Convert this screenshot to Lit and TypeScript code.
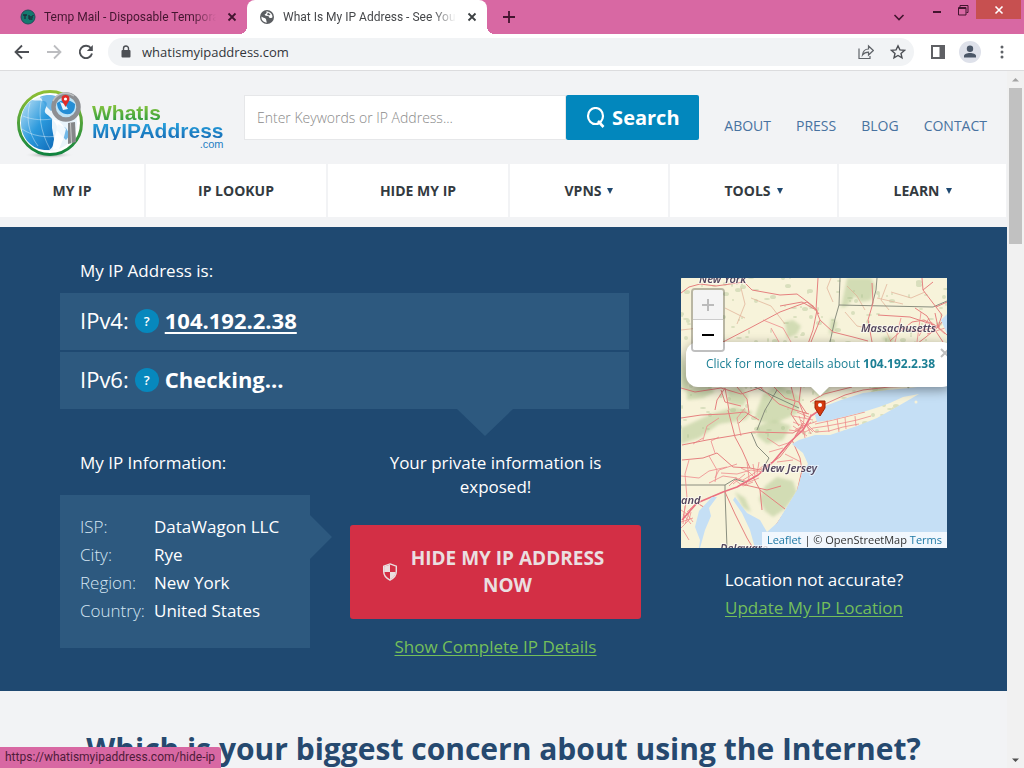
import { LitElement, html, svg, css } from "lit";
import { customElement, state } from "lit/decorators.js";

const ui = css`
  *, *::before, *::after { box-sizing: border-box; }
  button, input { font: inherit; color: inherit; border: 0; background: none; padding: 0; margin: 0; }
  button { cursor: pointer; }
  a { color: inherit; text-decoration: none; }
  svg { display: block; flex: none; }
`;

@customElement("browser-chrome")
class BrowserChrome extends LitElement {
  static styles = [ui, css`
    :host { display: block; flex: none; font-family: "Open Sans", sans-serif; }
    .titlebar { height: 34px; background: #d868a3; display: flex; align-items: flex-start; padding-left: 8px; color: #43152f; }
    .tab { height: 34px; width: 239px; display: flex; align-items: center; gap: 8px; padding: 0 7px 0 12px; font: 12px Roboto, sans-serif; }
    .tab.active { width: 240px; background: #fff; border-radius: 8px 8px 0 0; color: #45474a; position: relative; }
    .tab.active::before, .tab.active::after {
      content: ""; position: absolute; bottom: 0; width: 8px; height: 8px;
    }
    .tab.active::before { right: 100%; background: radial-gradient(circle at 0 0, transparent 8px, #fff 8px); }
    .tab.active::after { left: 100%; background: radial-gradient(circle at 100% 0, transparent 8px, #fff 8px); }
    .title {
      flex: 1; min-width: 0; overflow: hidden; white-space: nowrap; line-height: 16px;
      mask-image: linear-gradient(to right, #000 calc(100% - 24px), transparent);
    }
    .newtab { height: 34px; width: 44px; display: grid; place-items: center; }
    .controls { margin-left: auto; display: flex; align-items: flex-start; padding-right: 3px; }
    .ctl { display: grid; place-items: center; height: 19px; width: 26px; }
    .more { height: 34px; width: 50px; }
    .close { width: 45px; background: #c75050; }
    .toolbar { height: 37px; background: #fff; border-bottom: 1px solid #dcdcde; display: flex; align-items: center; padding: 0 6px; }
    .tool { width: 32px; height: 32px; display: grid; place-items: center; }
    .address { flex: 1; height: 28px; margin: 0 8px 0 6px; border-radius: 14px; background: #f1f3f5; display: flex; align-items: center; padding-left: 10px; }
    .address input { flex: 1; min-width: 0; margin-left: 8px; font-size: 13px; color: #33363b; outline: none; }
  `];

  private cross(c: string) {
    return html`<svg width="16" height="16" viewBox="0 0 16 16"><path d="M4.500 4.500L11.500 11.500M11.500 4.500L4.500 11.500" stroke=${c} stroke-width="1.800" /></svg>`;
  }

  render() {
    return html`
      <div class="titlebar">
        <div class="tab">
          <svg width="16" height="16" viewBox="0 0 16 16"><circle cx="8" cy="8" r="7" fill="#14796f" /><circle cx="8" cy="8" r="7" fill="none" stroke="#28495a" /><path d="M3 6h4M5 6v4M9 6v4M9 8h4M13 6v1M9 10h3.500" stroke="#1d2f3c" stroke-width="1.300" fill="none" /></svg>
          <span class="title">Temp Mail - Disposable Temporary Email</span>
          <button aria-label="Close tab">${this.cross("#43152f")}</button>
        </div>
        <div class="tab active">
          <svg width="16" height="16" viewBox="0 0 16 16"><circle cx="8" cy="8" r="7" fill="#5b5e62" /><path d="M2.500 7.500C4 9 5.500 8.500 6.500 9.500S7 12 8 13.500C4.500 13.500 2 11 2.500 7.500ZM7 2.500C8.500 3.500 7 5 5.500 5.500L7 7c2-.5 3 .5 3.500 2 1 .3 2 0 3-.8C13.500 5 11 2.300 7 2.500Z" fill="#fff" /><path d="M9 3.500l2.500 2-1.500 1L8 5.500z" fill="#5b5e62" /></svg>
          <span class="title">What Is My IP Address - See Your Public Address</span>
          <button aria-label="Close tab">${this.cross("#3c4043")}</button>
        </div>
        <button class="newtab" aria-label="New tab">
          <svg width="14" height="14" viewBox="0 0 14 14"><path d="M7 1v12M1 7h12" stroke="#43152f" stroke-width="1.800" /></svg>
        </button>
        <div class="controls">
          <button class="ctl more" aria-label="Search tabs"><svg width="12" height="12" viewBox="0 0 12 12"><path d="M1.500 4L6 8.500L10.500 4" fill="none" stroke="#43152f" stroke-width="1.600" /></svg></button>
          <button class="ctl" aria-label="Minimize"><svg width="12" height="12" viewBox="0 0 12 12"><path d="M2 8h8" stroke="#43152f" stroke-width="2" /></svg></button>
          <button class="ctl" aria-label="Restore"><svg width="12" height="12" viewBox="0 0 12 12"><path d="M3 3V1.500h8v7H9.500M1.500 3.500h7.500v7.500H1.500zM1 4.500h8" fill="none" stroke="#43152f" /></svg></button>
          <button class="ctl close" aria-label="Close"><svg width="10" height="10" viewBox="0 0 10 10"><path d="M1.500 1.500l7 7M8.500 1.500l-7 7" stroke="#fff" stroke-width="1.600" /></svg></button>
        </div>
      </div>
      <div class="toolbar">
        <button class="tool" aria-label="Back"><svg width="16" height="16" viewBox="0 0 16 16"><path d="M15 8H2M8 1.500L1.500 8L8 14.500" fill="none" stroke="#4c4f54" stroke-width="1.800" /></svg></button>
        <button class="tool" aria-label="Forward"><svg width="16" height="16" viewBox="0 0 16 16"><path d="M1 8h13M8 1.500L14.500 8L8 14.500" fill="none" stroke="#bcbdc0" stroke-width="1.800" /></svg></button>
        <button class="tool" aria-label="Reload"><svg width="16" height="16" viewBox="0 0 16 16"><path d="M13 4.200A6.200 6.200 0 1 0 14 9.500" fill="none" stroke="#4c4f54" stroke-width="1.900" /><path d="M14.800 1v6H8.800z" fill="#4c4f54" /></svg></button>
        <div class="address">
          <svg width="16" height="16" viewBox="0 0 16 16"><path d="M5.500 7V4.500a2.500 2.500 0 0 1 5 0V7" fill="none" stroke="#4c4f54" stroke-width="1.400" /><rect x="3.500" y="6" width="9" height="7.500" rx="1" fill="#4c4f54" /></svg>
          <input aria-label="Address" value="whatismyipaddress.com" />
          <button class="tool" aria-label="Share"><svg width="16" height="16" viewBox="0 0 16 16"><path d="M1 4.500V14.500H12V12M4.500 11C5 7 7 5 10.500 5V2L15.300 6.500L10.500 11V8.200C8 8.200 6 9 4.500 11Z" fill="none" stroke="#5f6368" stroke-width="1.200" /></svg></button>
          <button class="tool" aria-label="Bookmark"><svg width="16" height="16" viewBox="0 0 16 16"><path d="M8 1.800l1.900 4.100 4.500.5-3.400 3 1 4.400L8 11.500l-4 2.300 1-4.400-3.400-3 4.500-.5z" fill="none" stroke="#4c4f54" stroke-width="1.400" /></svg></button>
        </div>
        <button class="tool" aria-label="Side panel"><svg width="16" height="16" viewBox="0 0 16 16"><path d="M1 1h14v14H1zM3 3v10h6.500V3z" fill-rule="evenodd" fill="#5f6064" /></svg></button>
        <button class="tool" aria-label="Profile"><svg width="22" height="22" viewBox="0 0 22 22"><circle cx="11" cy="11" r="11" fill="#dee1ea" /><circle cx="11" cy="7.700" r="3.200" fill="#4b5768" /><path d="M5 16.500v-1.500c0-2 3-3 6-3s6 1 6 3v1.500z" fill="#4b5768" /></svg></button>
        <button class="tool" aria-label="Menu"><svg width="16" height="16" viewBox="0 0 16 16"><g fill="#5f6368"><circle cx="8" cy="3" r="1.500" /><circle cx="8" cy="8" r="1.500" /><circle cx="8" cy="13" r="1.500" /></g></svg></button>
      </div>
    `;
  }
}

@customElement("site-header")
class SiteHeader extends LitElement {
  static styles = [ui, css`
    :host { display: block; background: #f2f3f5; font-family: "Open Sans", sans-serif; }
    .top { display: flex; align-items: flex-start; padding: 18px 20px 0 16px; height: 93px; }
    .logo { display: flex; gap: 8px; width: 208px; }
    .words { display: flex; flex-direction: column; font: bold 21px/18px "Liberation Sans", sans-serif; padding-top: 15px; }
    .green, .blue { background: linear-gradient(#8cc63f, #2a9a3d); background-clip: text; color: transparent; }
    .blue { background: linear-gradient(#2aa6e0, #1568b3); background-clip: text; }
    .com { font: 11px/9px "Liberation Sans", sans-serif; color: #1f7fc4; text-align: right; }
    .search { display: flex; flex: 1; margin: 6px 25px 0 20px; }
    .field { flex: 1; min-width: 0; height: 45px; background: #fff; border: 1px solid #e6e7e9; padding: 0 12px; font-size: 14px; color: #555; outline: none; }
    .field::placeholder { color: #8a8a8a; opacity: 1; font-weight: 300; }
    .go { width: 133px; height: 45px; background: #0287bd; color: #fff; border-radius: 2px; font-weight: 700; font-size: 20px; display: flex; align-items: center; justify-content: center; gap: 6px; }
    .links { display: flex; gap: 25px; margin-top: 27px; font-size: 14px; line-height: 20px; color: #4872a0; font-weight: 500; }
    .menu { display: grid; grid-template-columns: 144fr 180fr 180fr 158fr 167fr 167fr; gap: 2px; padding: 0 1px 10px 0; }
    .item { height: 53px; background: #fff; color: #333a40; font-size: 14px; font-weight: 700; display: flex; align-items: center; justify-content: center; gap: 6px; }
  `];

  render() {
    const plain = ["MY IP", "IP LOOKUP", "HIDE MY IP"];
    const drops = ["VPNS", "TOOLS", "LEARN"];
    return html`
      <div class="top">
        <a class="logo" href="#" aria-label="WhatIsMyIPAddress.com">
          <svg width="68" height="70" viewBox="0 0 68 70">
            <defs>
              <linearGradient id="ring" x1="0" y1="0" x2="0" y2="1"><stop offset="0" stop-color="#8fbf35" /><stop offset="1" stop-color="#10843f" /></linearGradient>
              <linearGradient id="sea" x1="0" y1="0" x2="1" y2="1"><stop offset="0" stop-color="#bfe2f6" /><stop offset=".5" stop-color="#2c9add" /><stop offset="1" stop-color="#0b66b5" /></linearGradient>
              <radialGradient id="shade"><stop offset="0" stop-color="#777" /><stop offset="1" stop-color="#f2f3f5" stop-opacity="0" /></radialGradient>
            </defs>
            <ellipse cx="33" cy="66" rx="25" ry="3.500" fill="url(#shade)" />
            <circle cx="34" cy="34" r="31.500" fill="#fff" stroke="url(#ring)" stroke-width="3" />
            <circle cx="33" cy="34" r="28" fill="#e9f4fb" />
            <path d="M5 34C5 24 9 15 16 11c4 1 7 0 12 1s2 6 1 9 2 4 4 6 8 7 8 11-2 8-3 13-1 8-5 10C17 62 5 50 5 34Z" fill="url(#sea)" />
            <path d="M24 8c6-3 12-2 16-1l-3 6 4 5-6 4-5-5zM42 35l8 4 4 7-4 5-5-5-5-6z" fill="#3f9fdf" opacity=".7" />
            <path d="M7 27c9 4 22 5 33 2M6 40c10 7 24 9 36 7M14 14c-4 14-2 30 8 43M26 8c-4 16-2 34 8 52" fill="none" stroke="#fff" stroke-width=".7" opacity=".55" />
            <path d="M36 30l7 2 7 8-2 8-5 12-6 1 1-11-2-11z" fill="#fff" opacity=".9" />
            <path d="M52 34l7-1 1 20-8 2z" fill="#858789" /><path d="M54.500 34l1 20" stroke="#c8c9ca" />
            <circle cx="50" cy="18" r="12.500" fill="#bfe3f6" stroke="#8d8f93" stroke-width="4.500" />
            <path d="M41 14c6-4 12-4 18 1 0 5-1 8-5 10-7 1-13-3-13-11Z" fill="#268ed5" />
            <path d="M44 13l5 2 3 5-5 1z" fill="#e8f5fc" />
            <path d="M37 12a14 14 0 0 1 21-5" fill="none" stroke="#bfc1c3" stroke-width="1.500" />
            <path d="M49.500 18c-2-4-4-6-4-8a4 4 0 0 1 8 0c0 2-2 4-4 8Z" fill="#e02b28" /><circle cx="49.500" cy="10" r="1.600" fill="#fff" />
          </svg>
          <span class="words"><span class="green">WhatIs</span><span class="blue">MyIPAddress</span><span class="com">.com</span></span>
        </a>
        <form class="search" @submit=${(e: Event) => e.preventDefault()}>
          <input class="field" aria-label="Search" placeholder="Enter Keywords or IP Address..." />
          <button class="go"><svg width="20" height="22" viewBox="0 0 20 22"><ellipse cx="9.500" cy="9" rx="7.500" ry="8" fill="none" stroke="#fff" stroke-width="2.200" /><path d="M12 14l5.500 6" stroke="#fff" stroke-width="2.600" /></svg>Search</button>
        </form>
        <nav class="links">${["ABOUT", "PRESS", "BLOG", "CONTACT"].map((t) => html`<a href="#">${t}</a>`)}</nav>
      </div>
      <nav class="menu">
        ${plain.map((t) => html`<a class="item" href="#">${t}</a>`)}
        ${drops.map((t) => html`<button class="item">${t}<svg width="6" height="6" viewBox="0 0 6 6"><path d="M0 0h6L3 6z" fill="#1f4971" /></svg></button>`)}
      </nav>
    `;
  }
}

const WOODS = [
  "M166 0h24l4 8-4 14-10 2-6-6-8 10-6 2zM104 44l8-2 8 6-4 8-10 4zM150 40l6 4-2 10-6 2z",
  "M0 74l3 10 5 22-2 8-6-4zM6 110l22-2 6 6-12 6-16 2zM46 112l14-2 8 8-6 10-14-2z",
  "M74 138l8-22 16-9 22 12-3 16-22 10-16-1zM130 110l14-2 6 6-12 6z",
  "M0 150l30-14 24-7 18 5-8 8-26 4-20 14-18 6zM76 148l18-6 16 6-8 14-16 4-10-8z",
  "M84 208l12-9 16 4 4 12-12 16-12 8-8-6-6-12zM54 214l10 6 6 14-8-4z",
  "M200 60l8-2 6 4-6 4zM188 112l10-4 12 4-10 4z",
];

const ROADS = [
  "M1 182l21-2 14-5 16 14 17 1 10 2 20-13 13-17 10-17",
  "M1 167l25-5 30-5 16-3 40 1 10-6",
  "M47 132l7 27 7 13 8 18M44 110l4 22",
  "M72 199l7 13 25 19M79 212l2 20M60 206l26 6 14-4",
  "M111 162l8 18 2 12-5 22-12 20-18 26",
  "M44 214l10 22 12 24 6 10M16 225l10 6-8 12",
  "M0 15l8-6 11-3 16 2 28-4 8 8 28 5 17-1 16 12 6 8",
  "M42 64l27-14 30-16 27-10 10 8 -4 20-5 14",
  "M137 0l-2 32 4 10 13 12 20 5 15 4M139 42l-9 22M135 32l-14-8-22 4",
  "M191 5l1 20-5 17 4 22M197 37l32 2 30 10",
  "M241 0l1 12 13 17 6 8-4 12-12 10-8 6M242 12l10-8M255 29l11-5",
  "M257 49l-14-7-12 2-10 8-12 11M257 49l-20 4-18-3M257 49l-3-14M257 49l9 8M257 49l8-10M234 30l12 8 8 14 8 12",
  "M0 110l14 4 26-4 20 6 18-6 12-4M0 140l20-3 24-1 20-2 14 8",
  "M40 112l4 12 16 4M56 109l10 12 2 14-10 10M34 132l2-10 8-12",
  "M144 126l20-9 18-5 26-3 26-1 30-4M129 124l14-8 16-4 12-3",
  "M92 108l12 12 14 4 8 12M80 110l18 16 16 6 14 4",
  "M110 108l4 16-4 12 8 12M120 108l-2 16 6 16",
];

const STREETS = [
  "M112 144l10 4 12-4 8-4M114 152l12-6 8 8M118 138l4 12 2 10M124 134l-2 14-8 10M130 136l-4 12 4 8M112 148l14 10M116 156l14-12M108 152l16 2 8-4M116 134l14 6M112 138l20 4M120 142l12 12",
  "M132 150l14-2 16-3 14-3 14-4M134 154l14-1 14-4 16-3M134 146l14-3 16-4 20-5M146 142l2 12M156 140l2 14M164 139l1 12M174 138l1 10",
  "M60 190l8 4 6 6M56 196l14-4 12 2M62 202l10-6 10-8M66 184l2 16-4 8M72 186l2 12M54 200l14 4 10-4M52 206l12-10M40 195l16 1M34 200l4-8 18-6M28 205l14-7 14 2M48 208l6-6 8 6 10-4M78 184l-2 12",
  "M0 232l6 4 6 8M0 250l8-8 2-8M2 236l8 10M4 228l-2 18M10 230l-6 16M0 244l12-4M14 226l-8 8M2 252l6 10",
  "M8 182l-4 14 2 24-4 20M22 162l4-14 12-8M28 178l8 14-2 12M0 198l18 2 10-7 18-4M60 158l-4-18 8-10M12 166l10-6M34 175l-4-12 8-4M86 160l12 8 12-4M88 174l14-4M96 184l16-2M104 176l16 8",
  "M90 50l8 14M110 64l-8-14-20-8M220 40l-6 24M240 34l-4 30M248 40l-10 18M246 56l18-6M250 44l14 12",
];

const MINOR = "M30 60l10 4M60 10l4 16-8 20M0 52l18-2M150 0l-4 10 6 14M166 8l10 10 8 14M206 6l-6 16 8 10M204 50l6 14M210 14l20 6 14-6M164 34l12 14 10 2M196 20l26 6M70 20l20 8 14 18M44 30l20 10";

const BORDERS = [
  "M159 0l-1 27-4 14-5 23M158 27l94 2 14-6M196 0l-1 12-4 15",
  "M0 207h44v7l2 56M44 207l10-6 12 4",
  "M72 108l12 6 34 16M76 152l8-20 12-20M70 154l6 14 12 12-8 14M229 116l-3-10",
];

@customElement("location-map")
class LocationMap extends LitElement {
  static styles = [ui, css`
    :host { display: block; position: relative; height: 270px; overflow: hidden; background: #c5dff5; font-family: "Open Sans", sans-serif; }
    .tiles { width: 100%; height: 100%; }
    .label { font: italic 600 11px "Noto Sans", sans-serif; fill: #54475f; stroke: #fff; stroke-width: 2px; stroke-opacity: .5; paint-order: stroke; }
    .popup { position: absolute; left: 5px; top: 64px; width: 268px; height: 45px; border-radius: 12px; background: #fff; box-shadow: 0 3px 12px rgba(0, 0, 0, .4); display: flex; align-items: center; padding: 0 0 2px 20px; font-size: 12px; line-height: 16px; color: #1b7f94; white-space: nowrap; }
    .popup b { font-weight: 700; }
    .tip { position: absolute; left: 129px; top: 108px; width: 20px; height: 10px; background: #fff; clip-path: polygon(0 0, 100% 0, 50% 100%); }
    .dismiss { position: absolute; left: 258px; top: 69px; width: 12px; height: 12px; }
    .pin { position: absolute; left: 133px; top: 122px; }
    .zoom { position: absolute; left: 10px; top: 10px; width: 34px; border: 2px solid rgba(0, 0, 0, .25); border-radius: 4px; background-clip: padding-box; display: grid; }
    .zoom button { height: 30px; background: #fff; display: grid; place-items: center; border-radius: 0 0 2px 2px; }
    .zoom button:disabled { background: #f4f4f4; border-bottom: 1px solid #ccc; border-radius: 2px 2px 0 0; }
    .credit { position: absolute; right: 0; bottom: 0; background: rgba(255, 255, 255, .75); padding: 0 5px; font-size: 11px; line-height: 16px; color: #333; white-space: nowrap; }
    .credit a { color: #1f78a5; }
  `];

  render() {
    return html`
      <svg class="tiles" viewBox="0 0 266 270" preserveAspectRatio="xMidYMid slice" role="img" aria-label="Map of New York and New Jersey">
        <defs>
          <clipPath id="land"><path d="M0 0H266V36L260 42L266 56V105L229 110L206 112L182 115L160 122L144 128L134 137L136 144L150 142L166 138L182 134L198 129L209 125L222 119L238 116L226 123L212 131L196 140L176 148L149 157L134 157L118 162L111 166L122 175L127 186L121 195L116 212L104 232L96 245L86 254L83 249L79 242L66 235L54 219L52 222L61 235L69 252L74 270H19L24 252L30 238L28 230L36 219L31 219L18 233L14 249L19 262L18 270H0Z" /></clipPath>
          <filter id="soft"><feGaussianBlur stdDeviation="1.500" /></filter>
        </defs>
        <rect width="266" height="270" fill="#c5dff5" />
        <g clip-path="url(#land)">
          <rect width="266" height="270" fill="#f7f3da" />
          <g filter="url(#soft)">${WOODS.map((d) => svg`<path d=${d} fill="#bfd09f" opacity=".65" />`)}</g>
          <g fill="#a9bf8e" opacity=".38">
            ${Array.from({ length: 260 }, (_, i) => svg`<ellipse cx=${(i * 97 + ((i * i * 7) % 61)) % 266} cy=${(i * 59 + ((i * i * 5) % 43)) % 160} rx=${1 + (i % 3)} ry=${1 + (i % 2)} />`)}
          </g>
          <path d=${MINOR} fill="none" stroke="#dfae93" stroke-width=".7" />
          ${BORDERS.map((d) => svg`<path d=${d} fill="none" stroke="#7d8275" stroke-width=".9" />`)}
          ${STREETS.map((d) => svg`<path d=${d} fill="none" stroke="#ef8a8c" stroke-width=".8" stroke-linejoin="round" />`)}
          ${ROADS.map((d) => svg`<path d=${d} fill="none" stroke="#e5807f" stroke-width="1" stroke-linejoin="round" />`)}
          <path d="M1 242l15-17 26-11 14-5 21-12 15-13 17-20 13-12 8-14 12-8" fill="none" stroke="#ea7080" stroke-width="1.600" stroke-linejoin="round" />
        </g>
        <circle cx="235" cy="124" r="1.500" fill="#f7f3da" />
        <text class="label" x="18" y="5">New York</text>
        <text class="label" x="180" y="54">Massachusetts</text>
        <text class="label" x="81" y="194">New Jersey</text>
        <text class="label" x="0" y="226">and</text>
        <text class="label" x="39" y="274">Delaware</text>
      </svg>
      <svg class="pin" width="12" height="17" viewBox="0 0 12 17"><path d="M1 1h10v7L6 16L1 8z" fill="#d63a10" stroke="#9e2204" /><circle cx="6" cy="5" r="2" fill="#fff" /></svg>
      <a class="popup" href="#"><span>Click for more details about <b>104.192.2.38</b></span></a>
      <div class="tip"></div>
      <button class="dismiss" aria-label="Close popup"><svg width="12" height="12" viewBox="0 0 12 12"><path d="M2 2l8 8M10 2l-8 8" stroke="#bdbdbd" stroke-width="2" /></svg></button>
      <div class="zoom">
        <button disabled aria-label="Zoom in"><svg width="14" height="14" viewBox="0 0 14 14"><path d="M7 1v12M1 7h12" stroke="#bbb" stroke-width="2" /></svg></button>
        <button aria-label="Zoom out"><svg width="14" height="14" viewBox="0 0 14 14"><path d="M1 7h12" stroke="#000" stroke-width="2" /></svg></button>
      </div>
      <div class="credit"><a href="#">Leaflet</a> | © OpenStreetMap <a href="#">Terms</a></div>
    `;
  }
}

@customElement("ip-hero")
class IpHero extends LitElement {
  static styles = [ui, css`
    :host { display: grid; grid-template-columns: 1fr 266px; gap: 40px; background: #1f4971; color: #fff; padding: 32px 60px 32px; font: 17px/24px "Open Sans", sans-serif; }
    h2 { font: inherit; margin: 0; padding-left: 20px; }
    .addresses { position: relative; margin: 10px 12px 0 0; display: grid; gap: 2px; }
    .addresses::after { content: ""; position: absolute; left: 397px; top: 100%; width: 56px; height: 27px; background: #2d597f; clip-path: polygon(0 0, 100% 0, 50% 100%); }
    .row { height: 57px; padding: 0 20px 4px; background: #2d597f; display: flex; align-items: center; gap: 6px; font-size: 22px; line-height: 30px; }
    .row b { font-weight: 700; }
    .row a { text-decoration: underline; text-decoration-thickness: 2px; text-underline-offset: 3px; }
    .help { width: 24px; height: 24px; margin-top: 3px; border-radius: 12px; background: #0788bd; font-size: 13px; line-height: 24px; font-weight: 600; }
    .lower { display: grid; grid-template-columns: 250px 1fr; gap: 40px; margin-top: 42px; }
    .info { position: relative; margin-top: 20px; padding: 18px 20px 23px; background: #2d597f; }
    .info::after { content: ""; position: absolute; left: 100%; top: 20px; width: 22px; height: 44px; background: #2d597f; clip-path: polygon(0 0, 100% 50%, 0 100%); }
    dl { margin: 0; display: grid; grid-template-columns: 66px 1fr; column-gap: 8px; line-height: 28px; white-space: nowrap; }
    dt { color: #d5e6f3; font-weight: 300; }
    dd { margin: 0; }
    .expose { display: flex; flex-direction: column; align-items: center; text-align: center; }
    .expose p { margin: 0 32px; }
    .hide { align-self: stretch; margin: 26px 0 16px; height: 94px; padding: 0 32px; border-radius: 3px; background: #d32f45; color: #eadfe0; display: flex; align-items: center; justify-content: center; gap: 8px; font-size: 19px; line-height: 27px; font-weight: 700; }
    .green { color: #74bf5a; text-decoration: underline; text-underline-offset: 2px; }
    .place { padding-top: 19px; text-align: center; }
    .place p { margin: 20px 0 4px; }
  `];

  @state() private facts = [
    ["ISP:", "DataWagon LLC"],
    ["City:", "Rye"],
    ["Region:", "New York"],
    ["Country:", "United States"],
  ];

  render() {
    return html`
      <div>
        <h2>My IP Address is:</h2>
        <div class="addresses">
          <div class="row"><span>IPv4:</span><button class="help" aria-label="About IPv4">?</button><a href="#"><b>104.192.2.38</b></a></div>
          <div class="row"><span>IPv6:</span><button class="help" aria-label="About IPv6">?</button><b>Checking...</b></div>
        </div>
        <div class="lower">
          <div>
            <h2>My IP Information:</h2>
            <div class="info"><dl>${this.facts.map(([k, v]) => html`<dt>${k}</dt><dd>${v}</dd>`)}</dl></div>
          </div>
          <div class="expose">
            <p>Your private information is exposed!</p>
            <button class="hide">
              <svg width="16" height="18" viewBox="0 0 16 20"><path d="M8 1L15 3.500V9.500C15 14 12 17 8 19C4 17 1 14 1 9.500V3.500Z" fill="none" stroke="#eadfe0" stroke-width="1.600" /><path d="M8 2v8H1.500V4zM8 10h6.300c0 3.500-2.500 6.500-6.300 8z" fill="#eadfe0" /></svg>
              <span>HIDE MY IP ADDRESS NOW</span>
            </button>
            <a class="green" href="#">Show Complete IP Details</a>
          </div>
        </div>
      </div>
      <div class="place">
        <location-map></location-map>
        <p>Location not accurate?</p>
        <a class="green" href="#">Update My IP Location</a>
      </div>
    `;
  }
}

@customElement("app-root")
class AppRoot extends LitElement {
  static styles = [ui, css`
    :host { display: flex; flex-direction: column; height: 100vh; overflow: hidden; position: relative; background: #f2f3f5; font-family: "Open Sans", sans-serif; }
    .view { flex: 1; min-height: 0; display: flex; }
    .page { flex: 1; min-width: 0; overflow: hidden; }
    h1 { margin: 37px 0 0; text-align: center; font-size: 30px; line-height: 42px; font-weight: 700; color: #26496f; white-space: nowrap; }
    .bar { width: 17px; background: #f1f1f1; display: flex; flex-direction: column; align-items: center; padding: 6px 0 5px; }
    .thumb { width: 13px; height: 156px; margin-top: 6px; background: #c1c1c1; }
    .down { margin-top: auto; }
    .status { position: absolute; left: 0; bottom: 0; height: 21px; padding: 0 6px 0 5px; background: #d868a3; border-radius: 0 3px 0 0; color: #4f1c3a; font: 12px/21px Roboto, sans-serif; }
  `];

  render() {
    return html`
      <browser-chrome></browser-chrome>
      <div class="view">
        <main class="page">
          <site-header></site-header>
          <ip-hero></ip-hero>
          <h1>Which is your biggest concern about using the Internet?</h1>
        </main>
        <div class="bar">
          <svg width="7" height="5" viewBox="0 0 7 5"><path d="M0 4.500h7L3.500 1z" fill="#a3a3a3" /></svg>
          <div class="thumb"></div>
          <svg class="down" width="7" height="5" viewBox="0 0 7 5"><path d="M0 .5h7L3.500 4z" fill="#505050" /></svg>
        </div>
      </div>
      <div class="status">https://whatismyipaddress.com/hide-ip</div>
    `;
  }
}
